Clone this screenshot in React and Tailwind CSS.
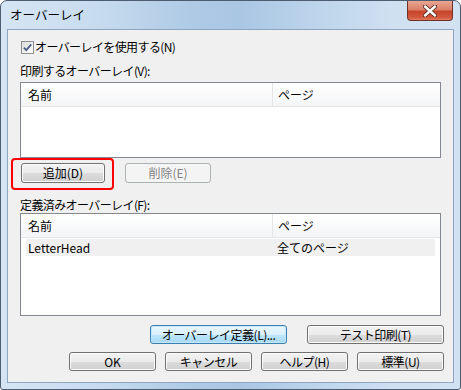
import React from "react";

const font = { fontFamily: '"Noto Sans CJK JP", "Noto Sans", sans-serif' };

function Btn({ children, className = "", variant = "normal" }) {
  const base =
    "flex items-center justify-center rounded-[3px] border text-[12px] leading-none";
  const styles = {
    normal:
      "border-[#707070] bg-[linear-gradient(#f2f2f2_0%,#ebebeb_50%,#dddddd_51%,#cfcfcf_100%)] text-black shadow-[inset_0_0_0_1px_#fbfbfb]",
    def:
      "border-[#3c7fb1] bg-[linear-gradient(#eaf6fd_0%,#d9f0fc_50%,#bee6fd_51%,#a7d9f5_100%)] text-black shadow-[inset_0_0_0_1px_#c3e8fb]",
    disabled: "border-[#adb2b5] bg-[#f4f4f4] text-[#838383]",
  };
  return <div className={`${base} ${styles[variant]} ${className}`}>{children}</div>;
}

function ListBox({ height, rows = [] }) {
  return (
    <div
      className={`mx-[12px] border border-[#828790] bg-white ${height} flex flex-col`}
    >
      <div className="flex h-[24px] border-b border-[#e5e5e5] bg-[linear-gradient(#ffffff,#f4f5f7)] text-[12px]">
        <div className="w-[252px] border-r border-[#e5e5e5] pl-[7px] flex items-center">
          名前
        </div>
        <div className="flex-1 pl-[5px] flex items-center">ページ</div>
      </div>
      {rows.map((r, i) => (
        <div
          key={i}
          className="flex h-[17px] mx-[5px] mt-[1px] bg-[#f0f0f0] text-[12px] items-center"
        >
          <div className="w-[248px] pl-[2px]">{r[0]}</div>
          <div className="flex-1 pl-[3px]">{r[1]}</div>
        </div>
      ))}
    </div>
  );
}

export default function App() {
  return (
    <div
      style={font}
      className="relative w-[461px] h-[390px] border border-[#4c5d71] rounded-t-[7px] rounded-b-[3px] bg-[linear-gradient(90deg,#d6e5f4_0%,#c8dcef_20%,#aecae5_42%,#a9c6e3_52%,#bcd4eb_68%,#cfe0f1_85%,#d2e2f2_100%)] overflow-hidden text-black"
    >
      {/* title bar */}
      <div className="h-[28px] flex items-center pl-[9px] text-[12.5px] text-black">
        オーバーレイ
      </div>
      <div className="absolute right-[7px] top-[0px] w-[46px] h-[20px] rounded-b-[4px] border border-[#6d3129] border-t-0 bg-[linear-gradient(#e8a694_0%,#dc8068_45%,#c7452c_55%,#d2563b_85%,#e07a5a_100%)] flex items-center justify-center">
        <svg width="14" height="12" viewBox="0 0 14 12">
          <path d="M2 1.5 L12 10.5 M12 1.5 L2 10.5" stroke="#5a2a22" strokeWidth="4.2" strokeLinecap="round" />
          <path d="M2 1.5 L12 10.5 M12 1.5 L2 10.5" stroke="#ffffff" strokeWidth="2.4" strokeLinecap="round" />
        </svg>
      </div>

      {/* client */}
      <div className="mx-[6px] h-[354px] border border-[#8ea5c1] bg-[#f0f0f0] flex flex-col text-[12px]">
        {/* checkbox row */}
        <div className="mt-[10px] h-[14px] flex items-center pl-[13px]">
          <div className="w-[13px] h-[13px] border border-[#8e8f8f] bg-[linear-gradient(135deg,#dcdcdc,#ffffff)] flex items-center justify-center">
            <svg width="11" height="11" viewBox="0 0 11 11">
              <path d="M1.8 5.6 L4.3 8.2 L9.2 2.4" stroke="#4d6185" strokeWidth="1.8" fill="none" />
            </svg>
          </div>
          <span className="ml-[1px] tracking-[-0.6px]">オーバーレイを使用する(N)</span>
        </div>

        <div className="mt-[9px] h-[16px] flex items-center pl-[12px] tracking-[-0.6px]">
          印刷するオーバーレイ(V):
        </div>
        <div className="mt-[3px]">
          <ListBox height="h-[76px]" />
        </div>

        {/* add / delete row */}
        <div className="relative mt-[5px] h-[20px] flex gap-[20px] pl-[13px]">
          <Btn className="w-[84px] h-[20px]">追加(D)</Btn>
          <Btn variant="disabled" className="w-[86px] h-[20px]">削除(E)</Btn>
          <div className="absolute left-[3px] top-[-5px] w-[103px] h-[32px] border-2 border-[#ff0000] rounded-[4px]" />
        </div>

        <div className="mt-[14px] h-[16px] flex items-center pl-[12px] tracking-[-0.6px]">
          定義済みオーバーレイ(F):
        </div>
        <ListBox height="h-[103px]" rows={[["LetterHead", "全てのページ"]]} />

        {/* bottom buttons */}
        <div className="mt-[9px] flex justify-end gap-[20px] pr-[9px]">
          <Btn variant="def" className="w-[137px] h-[19px] tracking-[-0.5px]">
            オーバーレイ定義(L)...
          </Btn>
          <Btn className="w-[137px] h-[19px] tracking-[-0.5px]">テスト印刷(T)</Btn>
        </div>
        <div className="mt-[8px] flex justify-end gap-[9px] pr-[9px]">
          <Btn className="w-[87px] h-[19px]">OK</Btn>
          <Btn className="w-[87px] h-[19px] tracking-[-0.5px]">キャンセル</Btn>
          <Btn className="w-[87px] h-[19px] tracking-[-0.5px]">ヘルプ(H)</Btn>
          <Btn className="w-[87px] h-[19px] tracking-[-0.5px]">標準(U)</Btn>
        </div>
      </div>
    </div>
  );
}
